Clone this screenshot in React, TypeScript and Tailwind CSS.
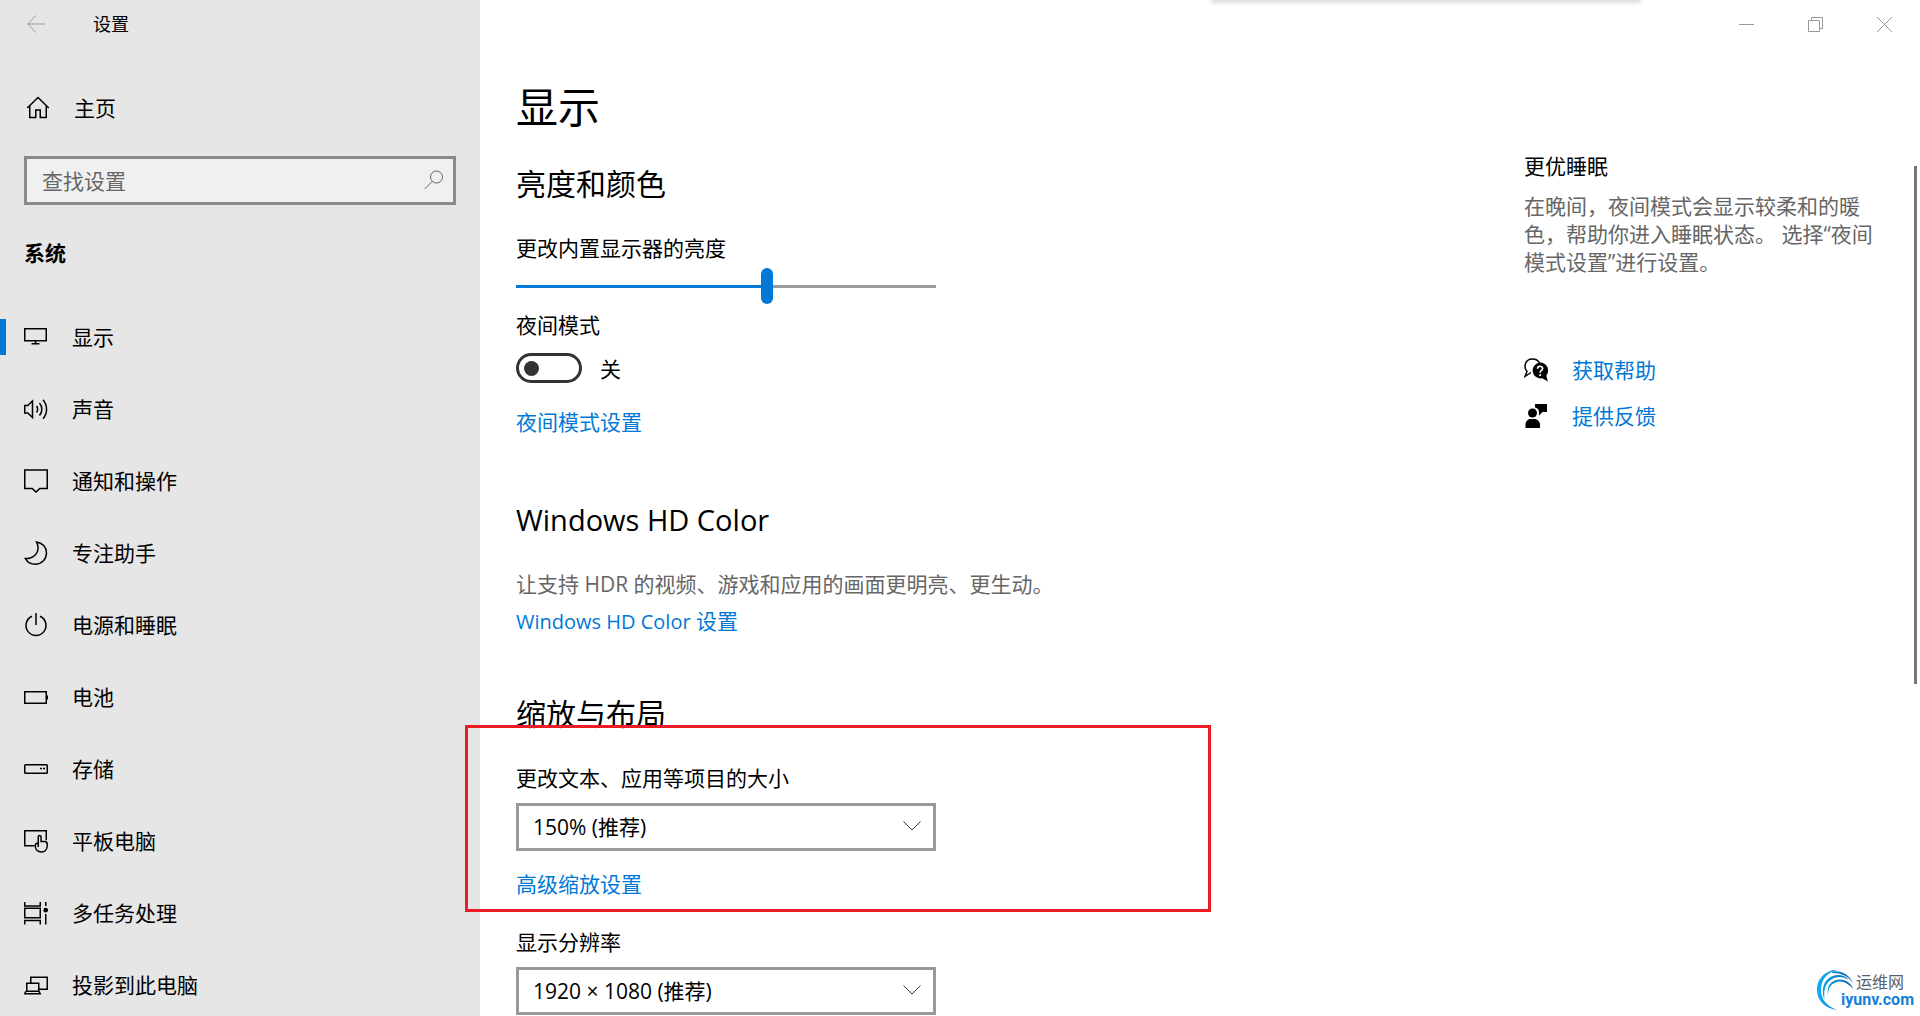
import { useState } from 'react';
import type { ReactNode } from 'react';

interface NavItem {
  id: string;
  label: string;
  icon: ReactNode;
}

interface IconProps {
  children: ReactNode;
}

interface SelectFieldProps {
  id: string;
  label: string;
  options: string[];
}

interface HelpLinkProps {
  label: string;
  icon: ReactNode;
}

function Icon({ children }: IconProps) {
  return (
    <svg
      width="24"
      height="24"
      viewBox="0 0 24 24"
      fill="none"
      stroke="currentColor"
      strokeWidth="1.5"
      className="shrink-0"
      aria-hidden="true"
    >
      {children}
    </svg>
  );
}

const navItems: NavItem[] = [
  {
    id: 'display',
    label: '显示',
    icon: <path d="M.75 3.75h21.5v12H.75zM11.5 15.75v3M7.5 18.75h8" />,
  },
  {
    id: 'sound',
    label: '声音',
    icon: (
      <path d="M.75 8.5h3l4.75-4.5v16.5l-4.75-4.5h-3zM12.5 9a5.5 5.5 0 0 1 0 6.5M15.5 6a9.5 9.5 0 0 1 0 12.5M19 2.8a14.5 14.5 0 0 1 0 19" />
    ),
  },
  {
    id: 'notifications',
    label: '通知和操作',
    icon: <path d="M.75.95h22.5v18.5h-7.4l-3.85 3.6-3.85-3.6H.75z" />,
  },
  {
    id: 'focus',
    label: '专注助手',
    icon: <path d="M12.5.9c6 .8 10 5.4 10 11.1 0 6.2-5 11.2-11.2 11.2-4.3 0-8-2.2-9.9-5.6C9.5 17.6 15.2 12 13.9 5.2 13.7 3.7 13.2 2.3 12.5.9z" />,
  },
  {
    id: 'power',
    label: '电源和睡眠',
    icon: <path d="M12 0v12M8 3.3a10 10 0 1 0 8 0" />,
  },
  {
    id: 'battery',
    label: '电池',
    icon: <path d="M.75 6.75h21.5v11.5H.75zM23.25 10.5v4" />,
  },
  {
    id: 'storage',
    label: '存储',
    icon: (
      <>
        <rect x=".75" y="7.75" width="22.5" height="8.5" rx=".8" />
        <path d="M16 11.5h2M19 11.5h2" />
      </>
    ),
  },
  {
    id: 'tablet',
    label: '平板电脑',
    icon: (
      <>
        <path d="M10.5 16.75H.75V1.75h21.5v9.5" />
        <path d="M14.25 14V8c0-2 2.8-2 2.8 0v4.5h3.4c1.8 0 2.8.9 2.8 2.7v1.3c0 3.9-2.3 6.5-5.8 6.5-4 0-6.2-2.9-6.2-6.2 0-1.7 1.3-2.8 3-2.8v4" />
      </>
    ),
  },
  {
    id: 'multitask',
    label: '多任务处理',
    icon: (
      <>
        <path d="M.75 1v4h15.5V1M.75 7.25h15.5v9.5H.75zM.75 23.5v-4h15.5v4M21.75 1v4M21.75 13v10.5" />
        <circle cx="21.7" cy="9.2" r="1.6" fill="currentColor" />
      </>
    ),
  },
  {
    id: 'project',
    label: '投影到此电脑',
    icon: <path d="M6.75 10V4.25h16.5v12h-8M2.75 10.25h12v8h-12zM1.7 18.25l-.9 2.5h15.4l-1.2-2.5" />,
  },
];

function SelectField({ id, label, options }: SelectFieldProps) {
  return (
    <div className="w-[420px] max-w-full">
      <label htmlFor={id} className="block leading-7">
        {label}
      </label>
      <div className="relative mt-[11px]">
        <select id={id} className="block h-12 w-full appearance-none border-3 border-[#999] bg-white pr-12 pl-3.5 leading-7">
          {options.map((option) => (
            <option key={option}>{option}</option>
          ))}
        </select>
        <svg
          width="18"
          height="10"
          viewBox="0 0 18 10"
          fill="none"
          stroke="#333"
          className="pointer-events-none absolute top-4.5 right-[15px]"
          aria-hidden="true"
        >
          <path d="M.5.5 9 9 17.5.5" />
        </svg>
      </div>
    </div>
  );
}

function HelpLink({ label, icon }: HelpLinkProps) {
  return (
    <a href="#" className="flex items-center gap-6 leading-7 text-[#0078d7]">
      <svg width="24" height="24" viewBox="0 0 24 24" className="shrink-0 text-black" aria-hidden="true">
        {icon}
      </svg>
      {label}
    </a>
  );
}

function Sidebar() {
  const [active, setActive] = useState('display');

  return (
    <aside className="w-120 shrink-0 bg-[#e6e6e6]">
      <div className="flex h-12 items-center pl-[27px]">
        <button type="button" aria-label="返回" className="text-[#999]">
          <svg width="18" height="18" viewBox="0 0 18 18" fill="none" stroke="currentColor" className="block">
            <path d="M9 .5.7 9 9 17.5M.7 9H18" />
          </svg>
        </button>
        <span className="ml-12 text-lg">设置</span>
      </div>

      <a href="#" className="mt-9 flex h-12 items-center pl-[26px]">
        <Icon>
          <path d="M1.2 12 12 1.5 22.8 12M3.75 10v11.5h6v-7.5h4.5v7.5h6V10" />
        </Icon>
        <span className="ml-6 pt-0.5">主页</span>
      </a>

      <div className="relative mx-6 mt-6">
        <input
          type="text"
          aria-label="查找设置"
          placeholder="查找设置"
          className="block h-[49px] w-full border-3 border-[#8a8a8a] bg-[#f0f0f0] pr-12 pl-[15px] placeholder:text-[#666]"
        />
        <svg
          width="20"
          height="20"
          viewBox="0 0 20 20"
          fill="none"
          stroke="#666"
          className="pointer-events-none absolute top-3.5 right-3"
          aria-hidden="true"
        >
          <circle cx="12.5" cy="7" r="6" />
          <path d="M8.3 11.3.8 19" />
        </svg>
      </div>

      <h2 className="mt-8 pl-6 leading-8 font-bold">系统</h2>

      <nav className="mt-8">
        {navItems.map((item) => (
          <button
            key={item.id}
            type="button"
            onClick={() => setActive(item.id)}
            className="flex h-18 w-full items-center text-left"
          >
            <span className={active === item.id ? 'h-9 w-1.5 bg-[#0078d7]' : 'h-9 w-1.5'} />
            <span className="ml-4.5">
              <Icon>{item.icon}</Icon>
            </span>
            <span className="ml-6 pt-0.5">{item.label}</span>
          </button>
        ))}
      </nav>
    </aside>
  );
}

function WindowControls() {
  return (
    <div className="-mr-0.5 flex h-12 justify-end text-[#999]">
      <button type="button" aria-label="最小化" className="flex w-[69px] items-center justify-center">
        <svg width="15" height="15" viewBox="0 0 15 15" fill="none" stroke="currentColor">
          <path d="M0 7.5h15" />
        </svg>
      </button>
      <button type="button" aria-label="还原" className="flex w-[69px] items-center justify-center">
        <svg width="15" height="15" viewBox="0 0 15 15" fill="none" stroke="currentColor">
          <path d="M.5 3.5h11v11H.5zM3.5 3.5v-3h11v11h-3" />
        </svg>
      </button>
      <button type="button" aria-label="关闭" className="flex w-[69px] items-center justify-center">
        <svg width="15" height="15" viewBox="0 0 15 15" fill="none" stroke="currentColor">
          <path d="M0 0l15 15M15 0 0 15" />
        </svg>
      </button>
    </div>
  );
}

function DisplaySettings() {
  const [brightness, setBrightness] = useState(60);
  const [nightLight, setNightLight] = useState(false);

  return (
    <div className="min-w-0 flex-1">
      <h1 className="text-[42px] leading-14">显示</h1>

      <section className="mt-[29px]">
        <h2 className="text-3xl leading-10">亮度和颜色</h2>
        <label htmlFor="brightness" className="mt-[30px] block leading-7">
          更改内置显示器的亮度
        </label>
        <input
          id="brightness"
          type="range"
          value={brightness}
          onChange={(e) => setBrightness(Number(e.target.value))}
          style={{
            backgroundImage: `linear-gradient(to right, #0078d7 ${brightness}%, #999 ${brightness}%)`,
          }}
          className="mt-1.5 block h-9 w-[420px] max-w-full appearance-none bg-[length:100%_3px] bg-center bg-no-repeat [&::-webkit-slider-thumb]:h-9 [&::-webkit-slider-thumb]:w-3 [&::-webkit-slider-thumb]:appearance-none [&::-webkit-slider-thumb]:rounded-full [&::-webkit-slider-thumb]:bg-[#0078d7]"
        />
        <label htmlFor="night-light" className="mt-[7px] block leading-7">
          夜间模式
        </label>
        <div className="mt-3.5 flex items-center gap-4.5">
          <input
            id="night-light"
            type="checkbox"
            role="switch"
            checked={nightLight}
            onChange={() => setNightLight((prev) => !prev)}
            className="flex h-[30px] w-[66px] appearance-none items-center rounded-full border-3 border-[#333] px-[5px] before:size-[15px] before:rounded-full before:bg-[#333] checked:justify-end checked:border-[#0078d7] checked:bg-[#0078d7] checked:before:bg-white"
          />
          <span className="pt-0.5 leading-7">{nightLight ? '开' : '关'}</span>
        </div>
        <a href="#" className="mt-[25px] block w-fit leading-7 text-[#0078d7]">
          夜间模式设置
        </a>
      </section>

      <section className="mt-16">
        <h2 className="text-[29px] leading-10">Windows HD Color</h2>
        <p className="mt-[30px] leading-7 text-[#666]">让支持 HDR 的视频、游戏和应用的画面更明亮、更生动。</p>
        <a href="#" className="mt-[9px] block w-fit leading-7 text-[#0078d7]">
          <span className="text-xl">Windows HD Color</span> 设置
        </a>
      </section>

      <section className="mt-[58px]">
        <h2 className="text-3xl leading-10">缩放与布局</h2>
        <div className="relative mt-[30px]">
          <SelectField id="scale" label="更改文本、应用等项目的大小" options={['150% (推荐)', '100%', '125%', '175%']} />
          <a href="#" className="mt-[19px] block w-fit leading-7 text-[#0078d7]">
            高级缩放设置
          </a>
          {/* 高亮框 */}
          <div className="pointer-events-none absolute -top-[39px] -bottom-3.5 -left-[51px] w-[746px] border-3 border-[#ed1c24]" />
        </div>
        <div className="mt-[30px]">
          <SelectField id="resolution" label="显示分辨率" options={['1920 × 1080 (推荐)', '1600 × 900', '1366 × 768']} />
        </div>
      </section>
    </div>
  );
}

function HelpPanel() {
  return (
    <aside className="mt-[73px] w-[354px] shrink-0">
      <h3 className="leading-7">更优睡眠</h3>
      <p className="mt-3 leading-7 text-[#666]">
        在晚间，夜间模式会显示较柔和的暖色，帮助你进入睡眠状态。 选择“夜间模式设置”进行设置。
      </p>
      <div className="mt-20 flex flex-col gap-4.5">
        <HelpLink
          label="获取帮助"
          icon={
            <>
              <path
                d="M7 14.5 1 18.5l2-5C-.5 9.5.5 1 8.5.9c3.5 0 5.8 1.6 7 4"
                fill="none"
                stroke="currentColor"
                strokeWidth="1.5"
              />
              <path d="M16 4.5a8 8 0 0 1 6.3 13l1.5 6-5.5-3.2A8 8 0 1 1 16 4.5z" fill="currentColor" />
              <path
                d="M13.6 10.7c0-3.2 5-3.2 5-.2 0 2-2.5 1.9-2.5 4.2M16.1 16.2v1.7"
                fill="none"
                stroke="#fff"
                strokeWidth="1.7"
              />
            </>
          }
        />
        <HelpLink
          label="提供反馈"
          icon={
            <g fill="currentColor">
              <path d="M11 0h12v8h-4.5L15 11.5V8c0-2.5-2-4-4-4.5z" />
              <circle cx="8.5" cy="9" r="4.5" />
              <path d="M1.5 24v-3.5c0-3 2.2-5.5 5-5.5h4c2.8 0 5.5 2.5 5.5 5.5V24z" />
            </g>
          }
        />
      </div>
    </aside>
  );
}

function Watermark() {
  return (
    <div className="pointer-events-none absolute right-1.5 bottom-1 h-11 w-[97px]">
      <svg width="37" height="41" viewBox="0 0 37 41" className="absolute top-0.5 left-0" aria-hidden="true">
        <defs>
          <linearGradient id="swirl" x1="0" y1="0" x2="37" y2="0" gradientUnits="userSpaceOnUse">
            <stop offset="0" stopColor="#0fb0f5" />
            <stop offset="1" stopColor="#0a5fa8" />
          </linearGradient>
        </defs>
        <g fill="url(#swirl)">
          <path d="M20 40C7 38 0 30 0 20 0 8 9 0 20 0 11 2 4 9 4 20c0 9 5.5 16 16 20z" />
          <path d="M15 1.5C24 0 32 4 36 13 31 6 24 2.800 15 3z" />
          <path d="M7.500 30C4 21 6 12 12 8c6-4.500 15-4 20 2-6-4-13-4-18.500 0C8 14 6.500 21 7.500 30z" />
          <path d="M11 25c-1.500-8 2-13 8-15 7-2 15 2 17 9-5-6-10.500-8.500-16-7-6 1.500-9 6-9 13z" />
        </g>
      </svg>
      <span className="absolute top-0.5 right-2.5 text-base leading-6 whitespace-nowrap text-[#555f6b]">运维网</span>
      <span className="absolute right-0 bottom-0.5 font-['Roboto',sans-serif] text-base leading-5 font-bold text-[#1580d8]">
        iyunv.com
      </span>
    </div>
  );
}

export default function App() {
  return (
    <div className="relative flex h-screen overflow-hidden bg-white pr-[3px] font-['Open_Sans','Noto_Sans_CJK_SC',sans-serif] text-[21px] text-black">
      <Sidebar />
      <main className="min-w-0 flex-1">
        <WindowControls />
        <div className="flex pt-[31px] pr-[39px] pl-9">
          <DisplaySettings />
          <HelpPanel />
        </div>
      </main>

      {/* 顶部窗口阴影 */}
      <div className="absolute -top-2 right-[279px] h-2 w-[430px] shadow-[0_3px_4px_rgba(0,0,0,0.14)]" />
      {/* 滚动条 */}
      <div className="absolute top-[166px] right-[3px] h-[518px] w-[3px] bg-[#767676]" />
      <Watermark />
    </div>
  );
}
